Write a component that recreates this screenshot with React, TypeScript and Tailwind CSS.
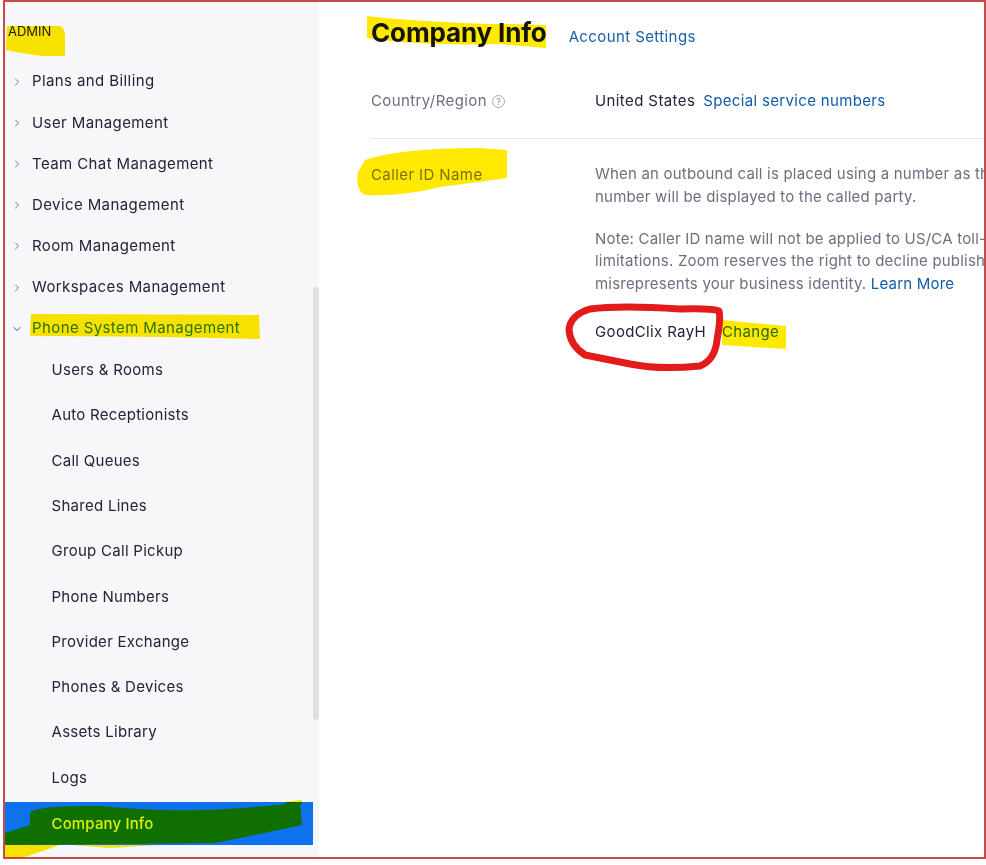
import { ChevronDown, ChevronRight } from 'lucide-react';

const topItems = [
  'Plans and Billing',
  'User Management',
  'Team Chat Management',
  'Device Management',
  'Room Management',
  'Workspaces Management',
];

const subItems = [
  'Users & Rooms',
  'Auto Receptionists',
  'Call Queues',
  'Shared Lines',
  'Group Call Pickup',
  'Phone Numbers',
  'Provider Exchange',
  'Phones & Devices',
  'Assets Library',
  'Logs',
];

function Sidebar() {
  return (
    <div className="relative w-[314px] shrink-0 bg-[#f7f7fa] pr-[6px] text-[15px] tracking-[0.4px]">
      <div className="h-[59px] pl-[3px] pt-[21px] text-[13px] leading-[16px] tracking-normal text-[#23233a]">ADMIN</div>
      {topItems.map(item => (
        <div key={item} className="flex h-[41.2px] items-center text-[#23233a]">
          <ChevronRight className="ml-[6px] mr-[9px] h-[12px] w-[12px] text-[#747487]" />
          {item}
        </div>
      ))}
      <div className="flex h-[41.2px] items-center text-[#2b7fff]">
        <ChevronDown className="ml-[6px] mr-[9px] h-[12px] w-[12px] text-[#1a5fa8]" />
        Phone System Management
      </div>
      <div className="-mt-[1.6px] tracking-[0.28px]">
        {subItems.map(item => (
          <div key={item} className="flex h-[45.3px] items-center pl-[46.5px] text-[#23233a]">
            {item}
          </div>
        ))}
        <div className="mt-[1.6px] flex h-[43px] items-center bg-[#0e72ed] pl-[46.5px]">
          <span className="relative z-10 font-medium tracking-[0.15px] text-[#dcf000]">Company Info</span>
        </div>
      </div>
      <div className="absolute right-0 top-[285px] h-[433px] w-[6px] rounded-full bg-[#e0e0e3]" />
    </div>
  );
}

function Content() {
  return (
    <div className="min-w-0 flex-1 overflow-hidden pl-[52px] text-[15px] tracking-[0.4px] text-[#6e6e80]">
      <div className="flex h-[63px] items-baseline pt-[13px]">
        <span className="text-[26px] font-bold leading-[36px] tracking-[-0.15px] text-[#131619]">Company Info</span>
        <span className="ml-[22px] text-[#1a5fa8]">Account Settings</span>
      </div>
      <div className="flex h-[74px] items-start border-b border-[#e4e4e8] pt-[25px]">
        <div className="flex w-[224px] shrink-0 items-center">
          Country/Region
          <span className="ml-[5px] flex h-[13px] w-[13px] items-center justify-center rounded-full border border-[#a8a8b3] text-[9px] leading-none tracking-normal text-[#8a8a99]">?</span>
        </div>
        <span className="text-[#23233a]">United States</span>
        <span className="ml-[8px] tracking-[0.34px] text-[#0f5cab]">Special service numbers</span>
      </div>
      <div className="flex pt-[24px]">
        <div className="w-[224px] shrink-0 leading-[23px] text-[#7c7c8c]">Caller ID Name</div>
        <div className="w-[560px] shrink-0 leading-[22.5px] tracking-[0.2px]">
          <div className="whitespace-nowrap">When an outbound call is placed using a number as the caller ID, this name and</div>
          <div className="whitespace-nowrap">number will be displayed to the called party.</div>
          <div className="mt-[19.5px] whitespace-nowrap">Note: Caller ID name will not be applied to US/CA toll-free numbers due to carrier</div>
          <div className="whitespace-nowrap">limitations. Zoom reserves the right to decline publishing a name that</div>
          <div className="whitespace-nowrap">
            misrepresents your business identity. <span className="text-[#0f5cab]">Learn More</span>
          </div>
          <div className="mt-[26px] flex tracking-[0.35px]">
            <span className="text-[#23233a]">GoodClix RayH</span>
            <span className="ml-[16px] text-[#2b74cc]">Change</span>
          </div>
        </div>
      </div>
    </div>
  );
}

// marker scribbles someone drew on top of the screenshot
function Annotations() {
  return (
    <svg className="pointer-events-none absolute left-0 top-0" width="986" height="865" viewBox="0 0 986 865">
      <g fill="#ffe900" style={{ mixBlendMode: 'multiply' }}>
        <path d="M7 26 L60 26 Q65 28 65 36 L65 56 L42 56 Q20 53 6 50 Z" />
        <path d="M31 314 Q120 314 259 315 L260 339 Q150 336 30 336 Z" />
        <path d="M367 16 L385 18 Q460 24 510 24 L546 25 L546 48 L500 44 Q420 46 367 38 Z" />
        <path d="M365 160 Q400 148 480 148 L507 150 L507 178 Q480 182 440 187 Q400 197 365 195 Q355 190 358 172 Z" />
        <path d="M722 320 L786 326 L786 349 L722 345 Z" />
        <path d="M5 845 L60 845 L22 858 L5 858 Z" />
        <path d="M70 845 L160 845 L110 848 Z" />
        <path d="M285 802 L302 800 L302 804 L285 804 Z" />
      </g>
      <path
        fill="#0f6f00"
        d="M30 812 Q40 805 100 806 Q150 811 200 810 Q260 808 300 802 L302 825 Q270 832 215 843 L5 845 L5 833 L30 825 Z"
      />
      <path
        fill="none"
        stroke="#e31b1b"
        strokeWidth="7"
        strokeLinejoin="round"
        d="M590 309 Q620 305 680 309 Q712 308 719 311 Q721 318 717 340 Q715 360 700 366 Q660 370 630 364 Q600 358 585 355 Q570 345 569 330 Q570 315 590 309 Z"
      />
    </svg>
  );
}

export default function App() {
  return (
    <div className="relative h-[865px] w-[986px] overflow-hidden bg-white font-['Inter',sans-serif]">
      <div className="ml-[3px] flex h-[859px] border-[2px] border-[#c94a4a]">
        <Sidebar />
        <Content />
      </div>
      <Annotations />
    </div>
  );
}
